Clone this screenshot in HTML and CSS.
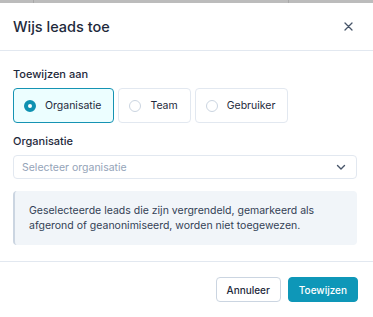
FILE: index.html
```html
<!DOCTYPE html>
<html lang="nl">
<head>
  <meta charset="UTF-8">
  <meta name="viewport" content="width=device-width, initial-scale=1.0">
  <title>Wijs leads toe</title>
  <link rel="stylesheet" href="styles.css">
</head>
<body>
  <div class="backdrop">
    <span class="line line-a"></span>
    <span class="line line-b"></span>
  </div>
  <div class="modal">
    <div class="modal-header">
      <h2>Wijs leads toe</h2>
      <button class="close" aria-label="Sluiten">
        <svg width="9" height="9" viewBox="0 0 9 9"><path d="M1 1l7 7M8 1l-7 7" stroke="#475569" stroke-width="1.3" stroke-linecap="round"/></svg>
      </button>
    </div>

    <div class="modal-body">
      <label class="field-label">Toewijzen aan</label>
      <div class="options">
        <div class="option selected"><span class="radio"></span>Organisatie</div>
        <div class="option"><span class="radio"></span>Team</div>
        <div class="option"><span class="radio"></span>Gebruiker</div>
      </div>

      <label class="field-label">Organisatie</label>
      <div class="select">
        <span>Selecteer organisatie</span>
        <svg width="12" height="12" viewBox="0 0 12 12"><path d="M2.5 4.5l3.5 3.5 3.5-3.5" fill="none" stroke="#475569" stroke-width="1.4" stroke-linecap="round" stroke-linejoin="round"/></svg>
      </div>

      <div class="notice">
        Geselecteerde leads die zijn vergrendeld, gemarkeerd als afgerond of geanonimiseerd, worden niet toegewezen.
      </div>
    </div>

    <div class="modal-footer">
      <button class="btn btn-secondary">Annuleer</button>
      <button class="btn btn-primary">Toewijzen</button>
    </div>
  </div>
</body>
</html>
```

FILE: styles.css
```css
body {
  font-family: 'Inter', 'Noto Sans', sans-serif;
  background-color: #ffffff;
  margin: 0;
  padding: 0;
  width: 373px;
  height: 317px;
  overflow: hidden;
  color: #1e293b;
}
.backdrop {
  height: 3px;
  background-color: #bcbcbc;
  position: relative;
}
.line {
  position: absolute;
  top: 0;
  width: 1px;
  height: 3px;
  background-color: #a8a8a8;
}
.line-a { left: 33px; }
.line-b { left: 288px; }
.modal {
  background-color: #ffffff;
  border-radius: 0 7px 0 0;
}
.modal-header {
  display: flex;
  justify-content: space-between;
  align-items: center;
  height: 47px;
  padding: 0 13px;
  border-bottom: 1px solid #e2e8f0;
}
.modal-header h2 {
  margin: 0;
  font-size: 14.5px;
  font-weight: 500;
  color: #1e293b;
}
.close {
  background: none;
  border: none;
  padding: 0;
  margin-right: 7px;
  display: flex;
}
.modal-body {
  padding: 16px 16px 16px 13px;
}
.field-label {
  display: block;
  font-size: 11px;
  font-weight: 500;
  color: #1e293b;
  margin-bottom: 7px;
}
.options {
  display: flex;
  gap: 4px;
  margin-bottom: 11px;
}
.option {
  display: flex;
  align-items: center;
  gap: 9px;
  height: 33px;
  padding: 0 12px 0 10px;
  border: 1px solid #e2e8f0;
  border-radius: 4px;
  font-size: 10.5px;
  color: #1e293b;
}
.option.selected {
  border-color: #1593b3;
  background-color: #ecfeff;
}
.radio {
  width: 12px;
  height: 12px;
  border: 1px solid #cbd5e1;
  border-radius: 50%;
  box-sizing: border-box;
  background-color: #ffffff;
}
.selected .radio {
  border: 4px solid #0e91b1;
}
.select {
  display: flex;
  justify-content: space-between;
  align-items: center;
  height: 22px;
  padding: 0 9px 0 8px;
  border: 1px solid #e2e8f0;
  border-radius: 4px;
  font-size: 10.5px;
  color: #94a3b8;
  margin-bottom: 12px;
}
.notice {
  background-color: #f1f5f9;
  border-left: 2px solid #cbd5e1;
  border-radius: 4px;
  padding: 12px 16px 12px 14px;
  font-size: 10.5px;
  line-height: 15px;
  color: #334155;
}
.modal-footer {
  display: flex;
  justify-content: flex-end;
  gap: 7px;
  padding: 15px 15px;
  border-top: 1px solid #e2e8f0;
}
.btn {
  font-family: inherit;
  font-size: 10px;
  font-weight: 500;
  height: 25px;
  padding: 0 10px;
  border-radius: 4px;
  cursor: pointer;
}
.btn-secondary {
  background-color: #ffffff;
  border: 1px solid #cbd5e1;
  color: #1e293b;
}
.btn-primary {
  background-color: #0e97b8;
  border: 1px solid #0e97b8;
  color: #ffffff;
}
```
